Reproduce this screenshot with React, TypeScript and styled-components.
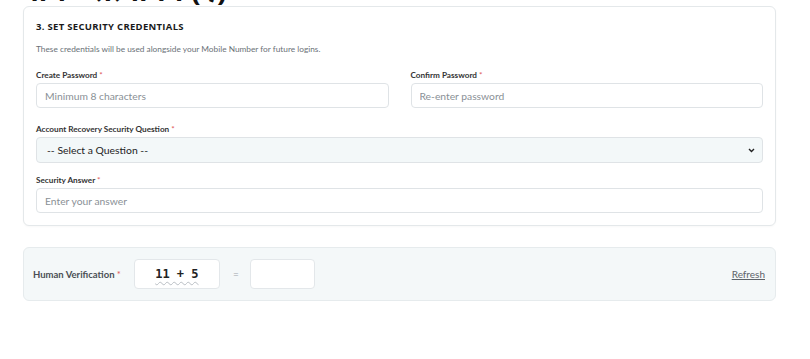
import React from "react";
import styled, { createGlobalStyle } from "styled-components";

const Global = createGlobalStyle`
  html, body { margin: 0; padding: 0; background: #ffffff; }
  body { font-family: Lato, "Open Sans", sans-serif; color: #222; }
  * { box-sizing: border-box; }
`;

const Page = styled.div`
  width: 810px;
  height: 359px;
  overflow: hidden;
  padding: 0 34px 0 23px;
`;

const TopHeading = styled.div`
  height: 6px;
  overflow: hidden;
  margin-left: -2px;
  span {
    display: block;
    margin-top: -25px;
    font-family: "Noto Sans", "Noto Sans Devanagari", "DejaVu Sans", sans-serif;
    font-size: 29px;
    font-weight: 700;
    line-height: 30px;
    color: #111;
    white-space: nowrap;
  }
`;

const Card = styled.section`
  border: 1px solid #e4e8ea;
  border-radius: 6px;
  background: #fff;
  padding: 13px 12px 12px 12px;
  box-shadow: 0 1px 2px rgba(0, 0, 0, 0.03);
`;

const Title = styled.h3`
  margin: 0;
  font-family: "Open Sans", Lato, sans-serif;
  font-size: 9.5px;
  font-weight: 700;
  letter-spacing: 0.3px;
  color: #1a1a1a;
  line-height: 14px;
`;

const Sub = styled.p`
  margin: 9px 0 0 0;
  font-size: 8.3px;
  color: #6b7177;
  line-height: 12px;
`;

const Row = styled.div`
  display: grid;
  grid-template-columns: 1fr 1fr;
  column-gap: 22px;
  margin-top: 14px;
`;

const Field = styled.div<{ $mt?: number }>`
  display: flex;
  flex-direction: column;
  margin-top: ${(p) => p.$mt ?? 0}px;
`;

const Label = styled.label`
  font-size: 8.2px;
  font-weight: 700;
  color: #333;
  line-height: 12px;
  margin-bottom: 2px;
`;

const Req = styled.span`
  color: #e05a5a;
  font-weight: 400;
`;

const Input = styled.input`
  height: 25px;
  width: 100%;
  border: 1px solid #dfe3e6;
  border-radius: 4px;
  padding: 0 8px;
  font-family: Lato, sans-serif;
  font-size: 10.3px;
  color: #333;
  background: #fff;
  outline: none;
  &::placeholder {
    color: #8a9096;
  }
`;

const Select = styled.div`
  height: 26px;
  width: 100%;
  border: 1px solid #dfe3e6;
  border-radius: 4px;
  padding: 0 7px 0 10px;
  font-size: 10.4px;
  color: #222;
  background: #f3f8f9;
  display: flex;
  align-items: center;
  justify-content: space-between;
`;

const Verify = styled.section`
  margin-top: 21px;
  height: 54px;
  border: 1px solid #e6ebed;
  border-radius: 6px;
  background: #f4f8f9;
  display: flex;
  align-items: center;
  padding: 0 10px 0 9px;
`;

const VLabel = styled.span`
  font-size: 9.5px;
  font-weight: 700;
  color: #4a4f55;
  margin-right: 13px;
`;

const Captcha = styled.div`
  width: 86px;
  height: 30px;
  background: #fff;
  border: 1px solid #e3e7ea;
  border-radius: 4px;
  display: flex;
  align-items: center;
  justify-content: center;
  font-family: "DejaVu Sans Mono", "Liberation Mono", monospace;
  font-weight: 700;
  font-size: 12px;
  color: #222;
  white-space: pre;
  span {
    text-decoration: underline wavy #b9bec3;
    text-decoration-thickness: 1px;
    text-underline-offset: 3px;
  }
`;

const Eq = styled.span`
  font-size: 10px;
  color: #a0a6ab;
  margin: 0 11px 0 13px;
`;

const Answer = styled.input`
  width: 65px;
  height: 30px;
  background: #fff;
  border: 1px solid #e3e7ea;
  border-radius: 4px;
  outline: none;
`;

const Refresh = styled.a`
  margin-left: auto;
  font-size: 10px;
  color: #5d6369;
  text-decoration: underline;
  cursor: pointer;
`;

const Chevron = () => (
  <svg width="7" height="5" viewBox="0 0 7 5">
    <path d="M1 1 L3.5 3.5 L6 1" fill="none" stroke="#222" strokeWidth="1.4" />
  </svg>
);

export default function App() {
  return (
    <Page>
      <Global />
      <TopHeading>
        <span>नाम - सत्यापन (१)</span>
      </TopHeading>
      <Card>
        <Title>3. SET SECURITY CREDENTIALS</Title>
        <Sub>These credentials will be used alongside your Mobile Number for future logins.</Sub>
        <Row>
          <Field>
            <Label>
              Create Password <Req>*</Req>
            </Label>
            <Input type="password" placeholder="Minimum 8 characters" />
          </Field>
          <Field>
            <Label>
              Confirm Password <Req>*</Req>
            </Label>
            <Input type="password" placeholder="Re-enter password" />
          </Field>
        </Row>
        <Field $mt={15}>
          <Label>
            Account Recovery Security Question <Req>*</Req>
          </Label>
          <Select>
            <span>-- Select a Question --</span>
            <Chevron />
          </Select>
        </Field>
        <Field $mt={11}>
          <Label>
            Security Answer <Req>*</Req>
          </Label>
          <Input placeholder="Enter your answer" />
        </Field>
      </Card>
      <Verify>
        <VLabel>
          Human Verification <Req>*</Req>
        </VLabel>
        <Captcha>
          <span>11 + 5</span>
        </Captcha>
        <Eq>=</Eq>
        <Answer />
        <Refresh>Refresh</Refresh>
      </Verify>
    </Page>
  );
}
